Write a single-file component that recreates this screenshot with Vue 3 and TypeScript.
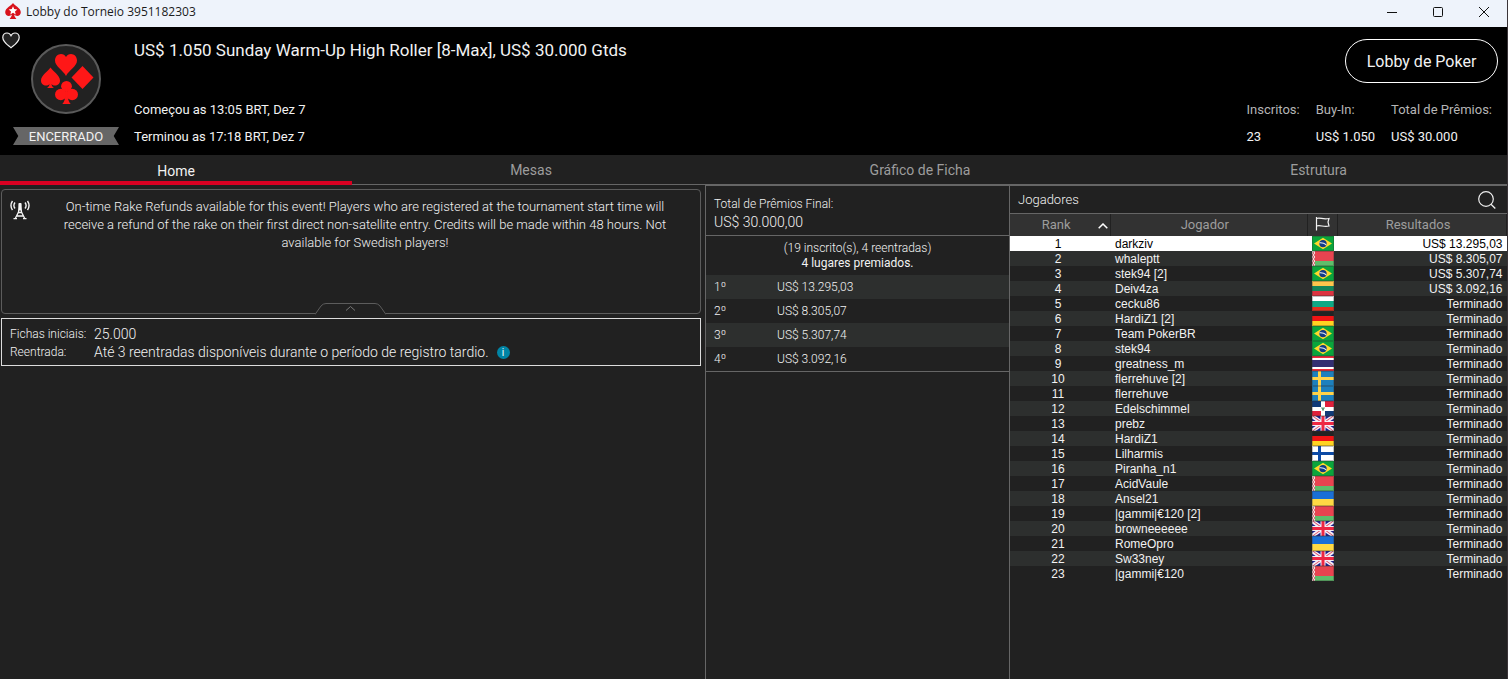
<script setup lang="ts">
import { ref } from 'vue'

interface Shape {
  d: string
  fill: string
}

type FlagCode = 'br' | 'by' | 'lt' | 'bg' | 'de' | 'th' | 'se' | 'do' | 'gb' | 'fi' | 'ua'

interface Player {
  name: string
  flag: FlagCode
  result: string
}

const tabs = [
  { id: 'home', label: 'Home' },
  { id: 'mesas', label: 'Mesas' },
  { id: 'grafico', label: 'Gráfico de Ficha' },
  { id: 'estrutura', label: 'Estrutura' },
]
const activeTab = ref('home')

const stats = [
  { label: 'Inscritos:', value: '23' },
  { label: 'Buy-In:', value: 'US$ 1.050' },
  { label: 'Total de Prêmios:', value: 'US$ 30.000' },
]

const prizes = [
  { place: '1º', amount: 'US$ 13.295,03' },
  { place: '2º', amount: 'US$ 8.305,07' },
  { place: '3º', amount: 'US$ 5.307,74' },
  { place: '4º', amount: 'US$ 3.092,16' },
]

const done = 'Terminado'
const players: Player[] = [
  { name: 'darkziv', flag: 'br', result: 'US$ 13.295,03' },
  { name: 'whaleptt', flag: 'by', result: 'US$ 8.305,07' },
  { name: 'stek94 [2]', flag: 'br', result: 'US$ 5.307,74' },
  { name: 'Deiv4za', flag: 'lt', result: 'US$ 3.092,16' },
  { name: 'cecku86', flag: 'bg', result: done },
  { name: 'HardiZ1 [2]', flag: 'de', result: done },
  { name: 'Team PokerBR', flag: 'br', result: done },
  { name: 'stek94', flag: 'br', result: done },
  { name: 'greatness_m', flag: 'th', result: done },
  { name: 'flerrehuve [2]', flag: 'se', result: done },
  { name: 'flerrehuve', flag: 'se', result: done },
  { name: 'Edelschimmel', flag: 'do', result: done },
  { name: 'prebz', flag: 'gb', result: done },
  { name: 'HardiZ1', flag: 'de', result: done },
  { name: 'Lilharmis', flag: 'fi', result: done },
  { name: 'Piranha_n1', flag: 'br', result: done },
  { name: 'AcidVaule', flag: 'by', result: done },
  { name: 'Ansel21', flag: 'ua', result: done },
  { name: '|gammi|€120 [2]', flag: 'by', result: done },
  { name: 'browneeeeee', flag: 'gb', result: done },
  { name: 'RomeOpro', flag: 'ua', result: done },
  { name: 'Sw33ney', flag: 'gb', result: done },
  { name: '|gammi|€120', flag: 'by', result: done },
]
const selected = ref(0)

const band = (y: number, h: number, fill: string): Shape => ({ d: `M0 ${y}h22v${h}H0z`, fill })

const flags: Record<FlagCode, Shape[]> = {
  br: [
    band(0, 15, '#0aa53c'),
    { d: 'M11 1.8 20 7.5 11 13.2 2 7.5z', fill: '#ffd92b' },
    { d: 'M11 3.9a3.7 3.7 0 1 1 0 7.4 3.7 3.7 0 0 1 0-7.4z', fill: '#123c85' },
    { d: 'M7.5 6.2c2.6-.3 5 .5 7 2.2l-.4 1C12.2 7.7 10 7 7.3 7.3z', fill: '#e8eef5' },
  ],
  by: [
    band(0, 15, '#e84450'),
    band(10, 5, '#5fbd6b'),
    { d: 'M0 0h3v15H0z', fill: '#f3dede' },
    { d: 'M1 1h1v2H1zM0 3h1v2H0zM2 3h1v2H2zM1 5h1v2H1zM0 7h1v2H0zM2 7h1v2H2zM1 9h1v2H1zM0 11h1v2H0zM2 11h1v2H2zM1 13h1v2H1z', fill: '#d9707a' },
  ],
  lt: [band(0, 5, '#ffc54c'), band(5, 5, '#15855a'), band(10, 5, '#dc3340')],
  bg: [band(0, 5, '#ffffff'), band(5, 6, '#0fa884'), band(11, 4, '#e2301c')],
  de: [band(0, 5, '#232323'), band(5, 5, '#f01414'), band(10, 5, '#ffd321')],
  th: [band(0, 15, '#ef2b3b'), band(2, 11, '#ffffff'), band(4, 7, '#332e71')],
  se: [band(0, 15, '#1d80bd'), band(6, 3, '#ffd34a'), { d: 'M6 0h3v15H6z', fill: '#ffd34a' }],
  do: [
    band(0, 15, '#ffffff'),
    { d: 'M0 0h9v6H0zM13 10h9v5h-9z', fill: '#103a78' },
    { d: 'M13 0h9v6h-9zM0 10h9v5H0z', fill: '#e0203b' },
    { d: 'M9 6.5h4v1h-1v2h-2v-2H9z', fill: '#5f9a78' },
  ],
  gb: [
    band(0, 15, '#1a1f8f'),
    { d: 'M0 0h3.5L22 12.5V15h-3.5L0 2.5zM22 0h-3.5L0 12.5V15h3.5L22 2.5z', fill: '#f4eef6' },
    { d: 'M0 0h1.2L11 6.8V8zM22 0h-1.2L11 6.8V8zM0 15h1.2L11 8V7zM22 15h-1.2L11 8V7z', fill: '#e2405a' },
    { d: 'M8.5 0h5v15h-5zM0 5h22v5H0z', fill: '#f4eef6' },
    { d: 'M9.5 0h3v15h-3zM0 6h22v3H0z', fill: '#ee2743' },
  ],
  fi: [band(0, 15, '#ffffff'), band(6, 3, '#0c4aa5'), { d: 'M6 0h3v15H6z', fill: '#0c4aa5' }],
  ua: [band(0, 8, '#1a6fd6'), band(8, 7, '#ffda44')],
}
</script>

<template>
  <div class="window">
    <div class="titlebar">
      <svg class="app-icon" viewBox="0 0 16 16" aria-hidden="true">
        <path d="M8 0C6.300 2.600.2 5 .2 9.200c0 2.300 1.700 3.700 3.600 3.700 1.300 0 2.300-.5 3-1.300-.1 1.700-.8 3-2.200 4.400h6.800c-1.400-1.400-2.100-2.700-2.200-4.400.7.8 1.700 1.300 3 1.300 1.900 0 3.600-1.400 3.600-3.700C15.800 5 9.700 2.600 8 0z" fill="#d8121c" />
        <path d="M8 3.300l1.200 2.800 3.100.3-2.300 2 .7 3L8 9.800l-2.700 1.600.7-3-2.300-2 3.100-.3z" fill="#fff" />
      </svg>
      <span class="titlebar-text">Lobby do Torneio 3951182303</span>
      <div class="window-controls">
        <button type="button" aria-label="Minimizar">
          <svg viewBox="0 0 12 12"><path d="M1 6.500h10" /></svg>
        </button>
        <button type="button" aria-label="Maximizar">
          <svg viewBox="0 0 12 12"><rect x="1.500" y="1.500" width="9" height="9" rx="1" /></svg>
        </button>
        <button type="button" aria-label="Fechar">
          <svg viewBox="0 0 12 12"><path d="M1 1l10 10M11 1L1 11" /></svg>
        </button>
      </div>
    </div>

    <header class="header">
      <button type="button" class="favorite" aria-label="Favorito">
        <svg viewBox="0 0 18 17"><path d="M9 15.800C6.200 13.300.8 10 .8 5.400.8 2.800 2.700 1 5 1c1.700 0 3.200 1 4 2.700C9.800 2 11.300 1 13 1c2.300 0 4.200 1.800 4.200 4.400C17.200 10 11.800 13.300 9 15.800z" fill="#222" stroke="#f2f2f2" stroke-width="1.200" /></svg>
      </button>
      <div class="badge">
        <svg class="emblem" viewBox="0 0 70 70" aria-hidden="true">
          <circle cx="35" cy="35" r="34" fill="#222" stroke="#5a5a5a" stroke-width="2" />
          <g fill="#ff1717">
            <path d="M35 32C32 26 24 22.500 24 16.500 24 12.800 26.800 10 30 10c2.200 0 4 1.100 5 3 1-1.900 2.800-3 5-3 3.200 0 6 2.800 6 6.500C46 22.500 38 26 35 32z" />
            <path d="M19.500 23.500c-2 3.500-9.500 7.500-9.500 13 0 3.200 2.300 5 5 5 1.500 0 2.700-.5 3.500-1.500-.2 1.800-1 3-2.500 4h7c-1.500-1-2.300-2.200-2.500-4 .8 1 2 1.500 3.500 1.500 2.700 0 5-1.800 5-5 0-5.500-7.500-9.500-9.500-13z" />
            <path d="M51.500 22 62.500 33.500 51.500 45 40.500 33.500z" />
            <circle cx="35.500" cy="42.300" r="5.400" />
            <circle cx="29.800" cy="50.500" r="5.800" />
            <circle cx="41.200" cy="50.500" r="5.800" />
            <path d="M34.300 44h2.400v7.500c.2 4 1.200 6.500 3 8.500h-8.400c1.800-2 2.800-4.500 3-8.500z" />
          </g>
        </svg>
        <div class="ribbon">ENCERRADO</div>
      </div>
      <div class="event">
        <h1>US$ 1.050 Sunday Warm-Up High Roller [8-Max], US$ 30.000 Gtds</h1>
        <div class="times">
          <p>Começou as 13:05 BRT, Dez 7</p>
          <p>Terminou as 17:18 BRT, Dez 7</p>
        </div>
      </div>
      <div class="summary">
        <button type="button" class="lobby-button">Lobby de Poker</button>
        <dl class="stats">
          <div v-for="s in stats" :key="s.label">
            <dt>{{ s.label }}</dt>
            <dd>{{ s.value }}</dd>
          </div>
        </dl>
      </div>
    </header>

    <nav class="tabs" role="tablist">
      <button
        v-for="t in tabs"
        :key="t.id"
        type="button"
        role="tab"
        :aria-selected="activeTab === t.id"
        :class="['tab', t.id, { active: activeTab === t.id }]"
        @click="activeTab = t.id"
      >
        {{ t.label }}
      </button>
    </nav>

    <main class="content">
      <section class="info">
        <div class="notice">
          <svg class="antenna" viewBox="0 0 20 20" fill="none" stroke="#f5f5f5" aria-hidden="true">
            <path d="M5 2.500a5 5 0 0 0 0 6M15 2.500a5 5 0 0 1 0 6M2.500 1a8 8 0 0 0 0 9M17.500 1a8 8 0 0 1 0 9" stroke-width="1.400" />
            <path d="M9.500 3 8.500 12 5 19M10.500 3l1 9L15 19M8 12.500h4M7 16h6M3.500 18.700h3.500M13 18.700h3.500" stroke-width="1.300" />
            <path d="M8.500 3.500h3l-.5 7h-2z" fill="#f5f5f5" stroke="none" />
          </svg>
          <p>On-time Rake Refunds available for this event! Players who are registered at the tournament start time will receive a refund of the rake on their first direct non-satellite entry. Credits will be made within 48 hours. Not available for Swedish players!</p>
          <button type="button" class="collapse" aria-label="Recolher">
            <svg viewBox="0 0 71 12" fill="none">
              <path d="M0 12V11L6 3Q8 .5 11 .5H60Q63 .5 65 3L71 11V12z" fill="#212121" />
              <path d="M0 11.500 6 3Q8 .5 11 .5H60Q63 .5 65 3L71 11.500" stroke="#5c5c5c" />
              <path d="M31 7.500l4.500-4 4.500 4" stroke="#777" />
            </svg>
          </button>
        </div>
        <dl class="details">
          <dt>Fichas iniciais:</dt>
          <dd>25.000</dd>
          <dt>Reentrada:</dt>
          <dd>
            Até 3 reentradas disponíveis durante o período de registro tardio.
            <button type="button" class="info-button">i</button>
          </dd>
        </dl>
      </section>

      <section class="prizes">
        <div class="pool">
          <div class="pool-label">Total de Prêmios Final:</div>
          <div class="pool-value">US$ 30.000,00</div>
        </div>
        <div class="entries">
          <div>(19 inscrito(s), 4 reentradas)</div>
          <div class="paid">4 lugares premiados.</div>
        </div>
        <table class="prize-table">
          <tbody>
            <tr v-for="p in prizes" :key="p.place">
              <td class="place">{{ p.place }}</td>
              <td>{{ p.amount }}</td>
            </tr>
          </tbody>
        </table>
      </section>

      <section class="players">
        <div class="players-head">
          <h2>Jogadores</h2>
          <button type="button" class="search" aria-label="Buscar">
            <svg viewBox="0 0 18 18" fill="none" stroke="#eee"><circle cx="8" cy="8" r="7.300" stroke-width="1.200" /><path d="M13 13.300 17.300 17.500" stroke-width="1.300" /></svg>
          </button>
        </div>
        <table class="player-table">
          <colgroup>
            <col class="c-rank" />
            <col />
            <col class="c-flag" />
            <col class="c-result" />
          </colgroup>
          <thead>
            <tr>
              <th scope="col" class="sorted">
                <span>Rank</span>
                <svg viewBox="0 0 10 6" fill="none" stroke="#fff" stroke-width="1.500" aria-hidden="true"><path d="M.7 5.300 5 1l4.300 4.300" /></svg>
              </th>
              <th scope="col" class="wide">Jogador</th>
              <th scope="col" aria-label="País">
                <svg class="flag-icon" viewBox="0 0 15 14" fill="none" stroke="#f2f2f2" stroke-width="1.200" aria-hidden="true"><path d="M1.500 0v13.500M1.500 1.500c4-1.500 6 1.500 12.500 0l-1 3.500 1 4c-5.500 1.500-8.500-1.500-12.500 0" /></svg>
              </th>
              <th scope="col" class="wide">Resultados</th>
            </tr>
          </thead>
          <tbody>
            <tr v-for="(p, i) in players" :key="i" :class="{ selected: selected === i }" @click="selected = i">
              <td class="rank">{{ i + 1 }}</td>
              <td class="name">{{ p.name }}</td>
              <td class="flag">
                <svg viewBox="0 0 22 15" aria-hidden="true">
                  <path v-for="(s, n) in flags[p.flag]" :key="n" :d="s.d" :fill="s.fill" />
                  <path d="M.5.5h21v14H.5z" fill="none" stroke="#333" stroke-opacity=".3" />
                </svg>
              </td>
              <td class="result">{{ p.result }}</td>
            </tr>
          </tbody>
        </table>
      </section>
    </main>
  </div>
</template>

<style>
body {
  margin: 0;
  background: #212121;
}
</style>

<style scoped>
.window {
  display: flex;
  flex-direction: column;
  min-height: 100vh;
  box-sizing: border-box;
  background: #212121;
  border-right: 1px solid #3a3438;
  color: #f2f2f2;
  font-family: Roboto, "Liberation Sans", sans-serif;
  font-size: 13px;
}

button {
  padding: 0;
  border: 0;
  background: none;
  color: inherit;
  font: inherit;
}

svg {
  display: block;
}

h1,
h2,
p,
dl,
dd {
  margin: 0;
}

table {
  width: 100%;
  border-collapse: collapse;
}

/* title bar */
.titlebar {
  display: flex;
  align-items: flex-start;
  height: 27px;
  padding-left: 5px;
  background: #eef3fb;
  color: #1b1b1b;
  font-family: "Open Sans", "Noto Sans", sans-serif;
  font-size: 12px;
}

.app-icon {
  width: 16px;
  height: 16px;
  margin: 3px 5px 0 0;
}

.titlebar-text {
  flex: 1;
  line-height: 24px;
}

.window-controls {
  display: flex;
}

.window-controls button {
  display: grid;
  place-items: center;
  width: 46px;
  height: 23px;
}

.window-controls svg {
  width: 12px;
  height: 12px;
  fill: none;
  stroke: #111;
}

/* header */
.header {
  position: relative;
  display: flex;
  height: 128px;
  background: #000;
}

.favorite {
  position: absolute;
  top: 5px;
  left: 2px;
}

.favorite svg {
  width: 18px;
  height: 17px;
}

.badge {
  display: flex;
  flex-direction: column;
  align-items: center;
  gap: 13px;
  width: 132px;
  padding-top: 17px;
}

.emblem {
  width: 70px;
  height: 70px;
}

.ribbon {
  width: 106px;
  height: 18px;
  background: #666;
  clip-path: polygon(0 0, 100% 0, 95% 50%, 100% 100%, 0 100%, 5% 50%);
  line-height: 19px;
  text-align: center;
}

.event {
  flex: 1;
  padding: 12px 0 0 2px;
}

h1 {
  font-size: 17px;
  font-weight: 400;
  line-height: 22px;
}

.times {
  padding-top: 35px;
  line-height: 27px;
}

.summary {
  display: flex;
  flex-direction: column;
  align-items: flex-end;
  padding: 12px 9px 0 0;
}

.lobby-button {
  width: 153px;
  height: 44px;
  border: 1px solid #fff;
  border-radius: 22px;
  font-size: 16px;
}

.stats {
  display: flex;
  gap: 16px;
  padding: 13px 6px 0 0;
  line-height: 27px;
}

.stats dt {
  color: #b5b5b5;
}

/* tabs */
.tabs {
  display: flex;
  height: 30px;
  background: #212121;
}

.tab {
  flex: 420 1 0;
  border-bottom: 1px solid #666;
  color: #9d9d9d;
  font-size: 14px;
}

.tab.home {
  flex-grow: 352;
}

.tab.mesas {
  flex-grow: 358;
}

.tab.estrutura {
  flex-grow: 377;
}

.tab.active {
  padding-top: 6px;
  border-bottom: 4px solid #d90022;
  color: #f2f2f2;
}

/* body columns */
.content {
  flex: 1;
  display: grid;
  grid-template-columns: 705fr 304fr 498fr;
}

.info {
  padding: 4px 4px 0 1px;
  font-weight: 300;
}

.notice {
  position: relative;
  display: flex;
  align-items: flex-start;
  box-sizing: border-box;
  height: 125px;
  padding: 8px 32px 0 8px;
  border: 1px solid #5c5c5c;
  border-radius: 4px;
}

.antenna {
  flex: none;
  width: 20px;
  height: 20px;
  margin-top: 2px;
}

.notice p {
  flex: 1;
  padding-left: 32px;
  line-height: 18px;
  text-align: center;
}

.collapse {
  position: absolute;
  bottom: -2px;
  left: calc(50% - 36px);
}

.collapse svg {
  width: 71px;
  height: 12px;
}

.details {
  display: grid;
  grid-template-columns: 84px 1fr;
  align-items: center;
  margin-top: 4px;
  padding: 6px 8px 4px;
  border: 1px solid #ddd;
  font-size: 12px;
  line-height: 18px;
}

.details dd {
  display: flex;
  align-items: center;
  gap: 8px;
  font-size: 14px;
}

.info-button {
  width: 13px;
  height: 13px;
  border-radius: 50%;
  background: #0084a5;
  color: #fff;
  font-size: 10px;
  font-weight: 400;
  line-height: 13px;
}

.prizes,
.players {
  border-top: 1px solid #666;
  border-left: 1px solid #666;
}

.prizes {
  font-size: 12px;
  font-weight: 300;
}

.pool {
  padding: 9px 8px 4px;
  border-bottom: 1px solid #666;
  line-height: 18px;
}

.pool-value {
  font-size: 14px;
}

.entries {
  padding: 5px 0 4px;
  line-height: 15px;
  text-align: center;
}

.paid {
  font-weight: 400;
}

.prize-table {
  border-bottom: 1px solid #666;
}

.prize-table td {
  height: 24px;
  padding: 0;
}

.prize-table .place {
  width: 63px;
  padding-left: 8px;
}

.prize-table tr:nth-child(odd) {
  background: #2d2f2e;
}

.players-head {
  display: flex;
  align-items: center;
  justify-content: space-between;
  height: 27px;
  padding: 0 11px 0 8px;
  border-bottom: 1px solid #666;
}

h2 {
  font-size: 13px;
  font-weight: 300;
}

.search svg {
  width: 18px;
  height: 18px;
}

.player-table {
  table-layout: fixed;
  font-family: "Liberation Sans", Arial, sans-serif;
  font-size: 12px;
}

.c-rank {
  width: 100px;
}

.c-flag {
  width: 30px;
}

.c-result {
  width: 169px;
}

th {
  height: 20px;
  padding: 0 0 2px;
  border-right: 1px solid #212121;
  background: #323232;
  color: #9d9d9d;
  font-family: Roboto, sans-serif;
  font-size: 13px;
  font-weight: 400;
}

.wide {
  padding-right: 8px;
}

.sorted {
  padding-right: 2px;
  text-align: right;
}

.sorted svg {
  display: inline-block;
  width: 10px;
  height: 6px;
  margin-left: 27px;
}

.flag-icon {
  width: 15px;
  height: 14px;
  margin: 0 auto;
}

.player-table td {
  height: 13px;
  padding: 2px 0 0;
  line-height: 13px;
}

.player-table tbody tr:nth-child(even) {
  background: #2d2f2e;
}

.player-table tbody tr.selected {
  background: #fff;
  color: #000;
}

.player-table .rank {
  padding-right: 4px;
  text-align: center;
}

.player-table .name {
  padding-left: 5px;
}

.player-table .flag {
  padding-top: 0;
}

.flag svg {
  width: 22px;
  height: 15px;
  margin: 0 auto;
}

.player-table .result {
  padding-right: 4px;
  text-align: right;
}
</style>
